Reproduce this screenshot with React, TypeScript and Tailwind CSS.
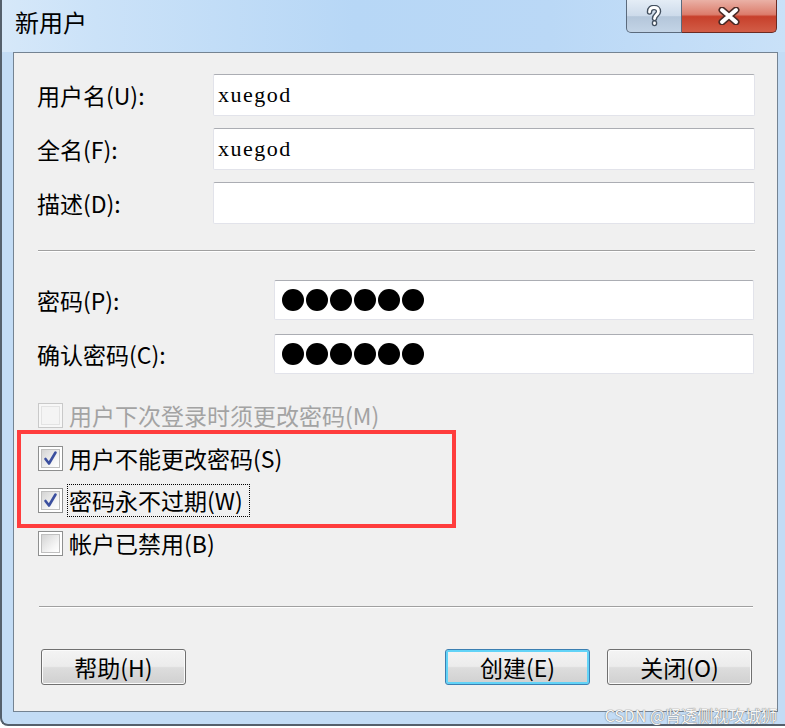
import React from "react";

const cjk = "font-['Noto_Sans_CJK_SC',sans-serif]";

function Field({ value }: { value?: string }) {
  return (
    <div className="flex-1 h-full bg-white rounded-[2px] border border-[#e2e3ea] border-t-[#abadb3] flex items-center pl-[4px]">
      {value && (
        <span className="font-['Liberation_Serif',serif] text-[22px] leading-none tracking-[1.5px] text-black">
          {value}
        </span>
      )}
    </div>
  );
}

function PwField() {
  return (
    <div className="flex-1 h-full bg-white rounded-[2px] border border-[#e2e3ea] border-t-[#abadb3] flex items-center pl-[7px] gap-[2px]">
      {[0, 1, 2, 3, 4, 5].map((i) => (
        <div key={i} className="w-[22px] h-[22px] rounded-full bg-black" />
      ))}
    </div>
  );
}

function Check({ checked, disabled }: { checked?: boolean; disabled?: boolean }) {
  return (
    <div
      className={
        "w-[25px] h-[25px] border p-[2px] shrink-0 " +
        (disabled ? "border-[#c9c9c9] bg-[#f7f7f7]" : "border-[#8e8f8f] bg-white")
      }
    >
      <div
        className={
          "w-full h-full relative border " +
          (disabled
            ? "border-[#e3e3e3] bg-[#f4f4f4]"
            : "border-[#bfbfbf] bg-[linear-gradient(135deg,#d4d4d4,#f6f6f6_70%,#ffffff)]")
        }
      >
        {checked && (
          <svg viewBox="0 0 17 17" className="absolute inset-0 w-full h-full">
            <path
              d="M3.5 9 L7 13.5 L13.5 2.5"
              fill="none"
              stroke="#3b4f9f"
              strokeWidth="2.6"
              strokeLinejoin="round"
              strokeLinecap="round"
            />
          </svg>
        )}
      </div>
    </div>
  );
}

function CheckRow({
  label,
  checked,
  disabled,
  focus,
}: {
  label: string;
  checked?: boolean;
  disabled?: boolean;
  focus?: boolean;
}) {
  return (
    <div className="h-[42px] flex items-center gap-[6px]">
      <Check checked={checked} disabled={disabled} />
      <span
        className={
          "text-[23px] leading-none whitespace-nowrap " +
          (disabled ? "text-[#a3a3a3]" : "text-black") +
          (focus ? " border border-dotted border-black py-[4px] pl-[1px] pr-[6px] -ml-[2px]" : "")
        }
      >
        {label}
      </span>
    </div>
  );
}

function Btn({ label, def }: { label: string; def?: boolean }) {
  return (
    <div
      className={
        "w-[145px] h-[36px] rounded-[3px] border flex items-center justify-center text-[23px] leading-none text-black bg-[linear-gradient(#f4f4f4,#ececec_48%,#dddddd_52%,#d0d0d0)] " +
        (def
          ? "border-[#3c7fb1] shadow-[inset_0_0_0_2px_#62d3f7]"
          : "border-[#707070] shadow-[inset_0_0_0_1px_#fbfbfb]")
      }
    >
      {label}
    </div>
  );
}

export default function App() {
  return (
    <div className={"w-[785px] h-[728px] bg-white overflow-hidden relative " + cjk}>
      <div className="h-[726px] border-l-2 border-b-2 border-[#55606c] rounded-bl-[8px] bg-[#c3dcf5] flex flex-col pl-[11px] pr-[7px] pb-[12px]">
        {/* title bar */}
        <div className="h-[52px] -ml-[11px] -mr-[7px] pl-[13px] pr-[8px] flex justify-between items-start bg-[linear-gradient(90deg,#d6e8f9,#cbe2f8_12%,#b7d7f6_45%,#bad8f6_70%,#c9e1f8)]">
          <div className="pt-[8px] text-[24px] leading-[28px] text-black">新用户</div>
          <div className="flex h-[33px]">
            <div className="w-[56px] h-full border border-t-0 border-[#5b6a7c] rounded-bl-[5px] bg-[linear-gradient(#e4edf6,#ccdaea_50%,#b4c6da_52%,#c3d4e6)] flex items-center justify-center">
              <svg width="16" height="22" viewBox="0 0 16 22">
                <path
                  d="M3.5 7 C3.5 3.5 5.5 2.5 8 2.5 C10.8 2.5 12.5 4 12.5 6.5 C12.5 9.5 8.5 10 8.5 13.5 M8.5 18 L8.5 18.5"
                  fill="none"
                  stroke="#43505f"
                  strokeWidth="5.5"
                  strokeLinecap="round"
                />
                <path
                  d="M3.5 7 C3.5 3.5 5.5 2.5 8 2.5 C10.8 2.5 12.5 4 12.5 6.5 C12.5 9.5 8.5 10 8.5 13.5 M8.5 18 L8.5 18.5"
                  fill="none"
                  stroke="#ffffff"
                  strokeWidth="2.8"
                  strokeLinecap="round"
                />
              </svg>
            </div>
            <div className="w-[95px] h-full border border-t-0 border-l-0 border-[#6b2a22] rounded-br-[5px] bg-[linear-gradient(#eab1a6,#dc7d6c_45%,#c7402b_52%,#d25d47)] flex items-center justify-center">
              <svg width="24" height="18" viewBox="0 0 24 18">
                <path d="M5 3 L19 15 M19 3 L5 15" stroke="#4a2a26" strokeWidth="7" strokeLinecap="round" />
                <path d="M5 3 L19 15 M19 3 L5 15" stroke="#ffffff" strokeWidth="4" strokeLinecap="round" />
              </svg>
            </div>
          </div>
        </div>

        {/* panel */}
        <div className="flex-1 border border-[#748392] bg-[#f0f0f0] flex flex-col pl-[23px] pr-[22px] pt-[21px]">
          <div className="flex flex-col gap-[12px]">
            <div className="h-[42px] flex items-center">
              <div className="w-[176px] text-[23px] leading-none">用户名(U):</div>
              <Field value="xuegod" />
            </div>
            <div className="h-[42px] flex items-center">
              <div className="w-[176px] text-[23px] leading-none">全名(F):</div>
              <Field value="xuegod" />
            </div>
            <div className="h-[42px] flex items-center">
              <div className="w-[176px] text-[23px] leading-none">描述(D):</div>
              <Field />
            </div>
          </div>

          <div className="mt-[26px] ml-[1px] border-t border-b border-t-[#a0a0a0] border-b-white" />

          <div className="mt-[28px] flex flex-col gap-[14px]">
            <div className="h-[40px] flex items-center pr-[1px]">
              <div className="w-[237px] text-[23px] leading-none">密码(P):</div>
              <PwField />
            </div>
            <div className="h-[40px] flex items-center pr-[1px]">
              <div className="w-[237px] text-[23px] leading-none">确认密码(C):</div>
              <PwField />
            </div>
          </div>

          <div className="mt-[20px] ml-[1px]">
            <CheckRow label="用户下次登录时须更改密码(M)" disabled />
          </div>
          <div className="-mt-[6px] -ml-[20px] w-[439px] border-[4px] border-[#ff3d3d] pl-[17px] py-[3px]">
            <CheckRow label="用户不能更改密码(S)" checked />
            <CheckRow label="密码永不过期(W)" checked focus />
          </div>
          <div className="-mt-[6px] ml-[1px]">
            <CheckRow label="帐户已禁用(B)" />
          </div>

          <div className="mt-[42px] ml-[2px] mr-[2px] border-t border-b border-t-[#a0a0a0] border-b-white" />

          <div className="mt-[41px] flex items-center pl-[4px] pr-[3px]">
            <Btn label="帮助(H)" />
            <div className="flex-1" />
            <Btn label="创建(E)" def />
            <div className="w-[17px]" />
            <Btn label="关闭(O)" />
          </div>
        </div>
      </div>
      <div className="absolute right-[8px] bottom-[5px] text-[16px] leading-none text-[#f7f7f7] [text-shadow:0_0_1px_#777,0_0_1px_#777]">
        CSDN @肾透侧视攻城狮
      </div>
    </div>
  );
}
